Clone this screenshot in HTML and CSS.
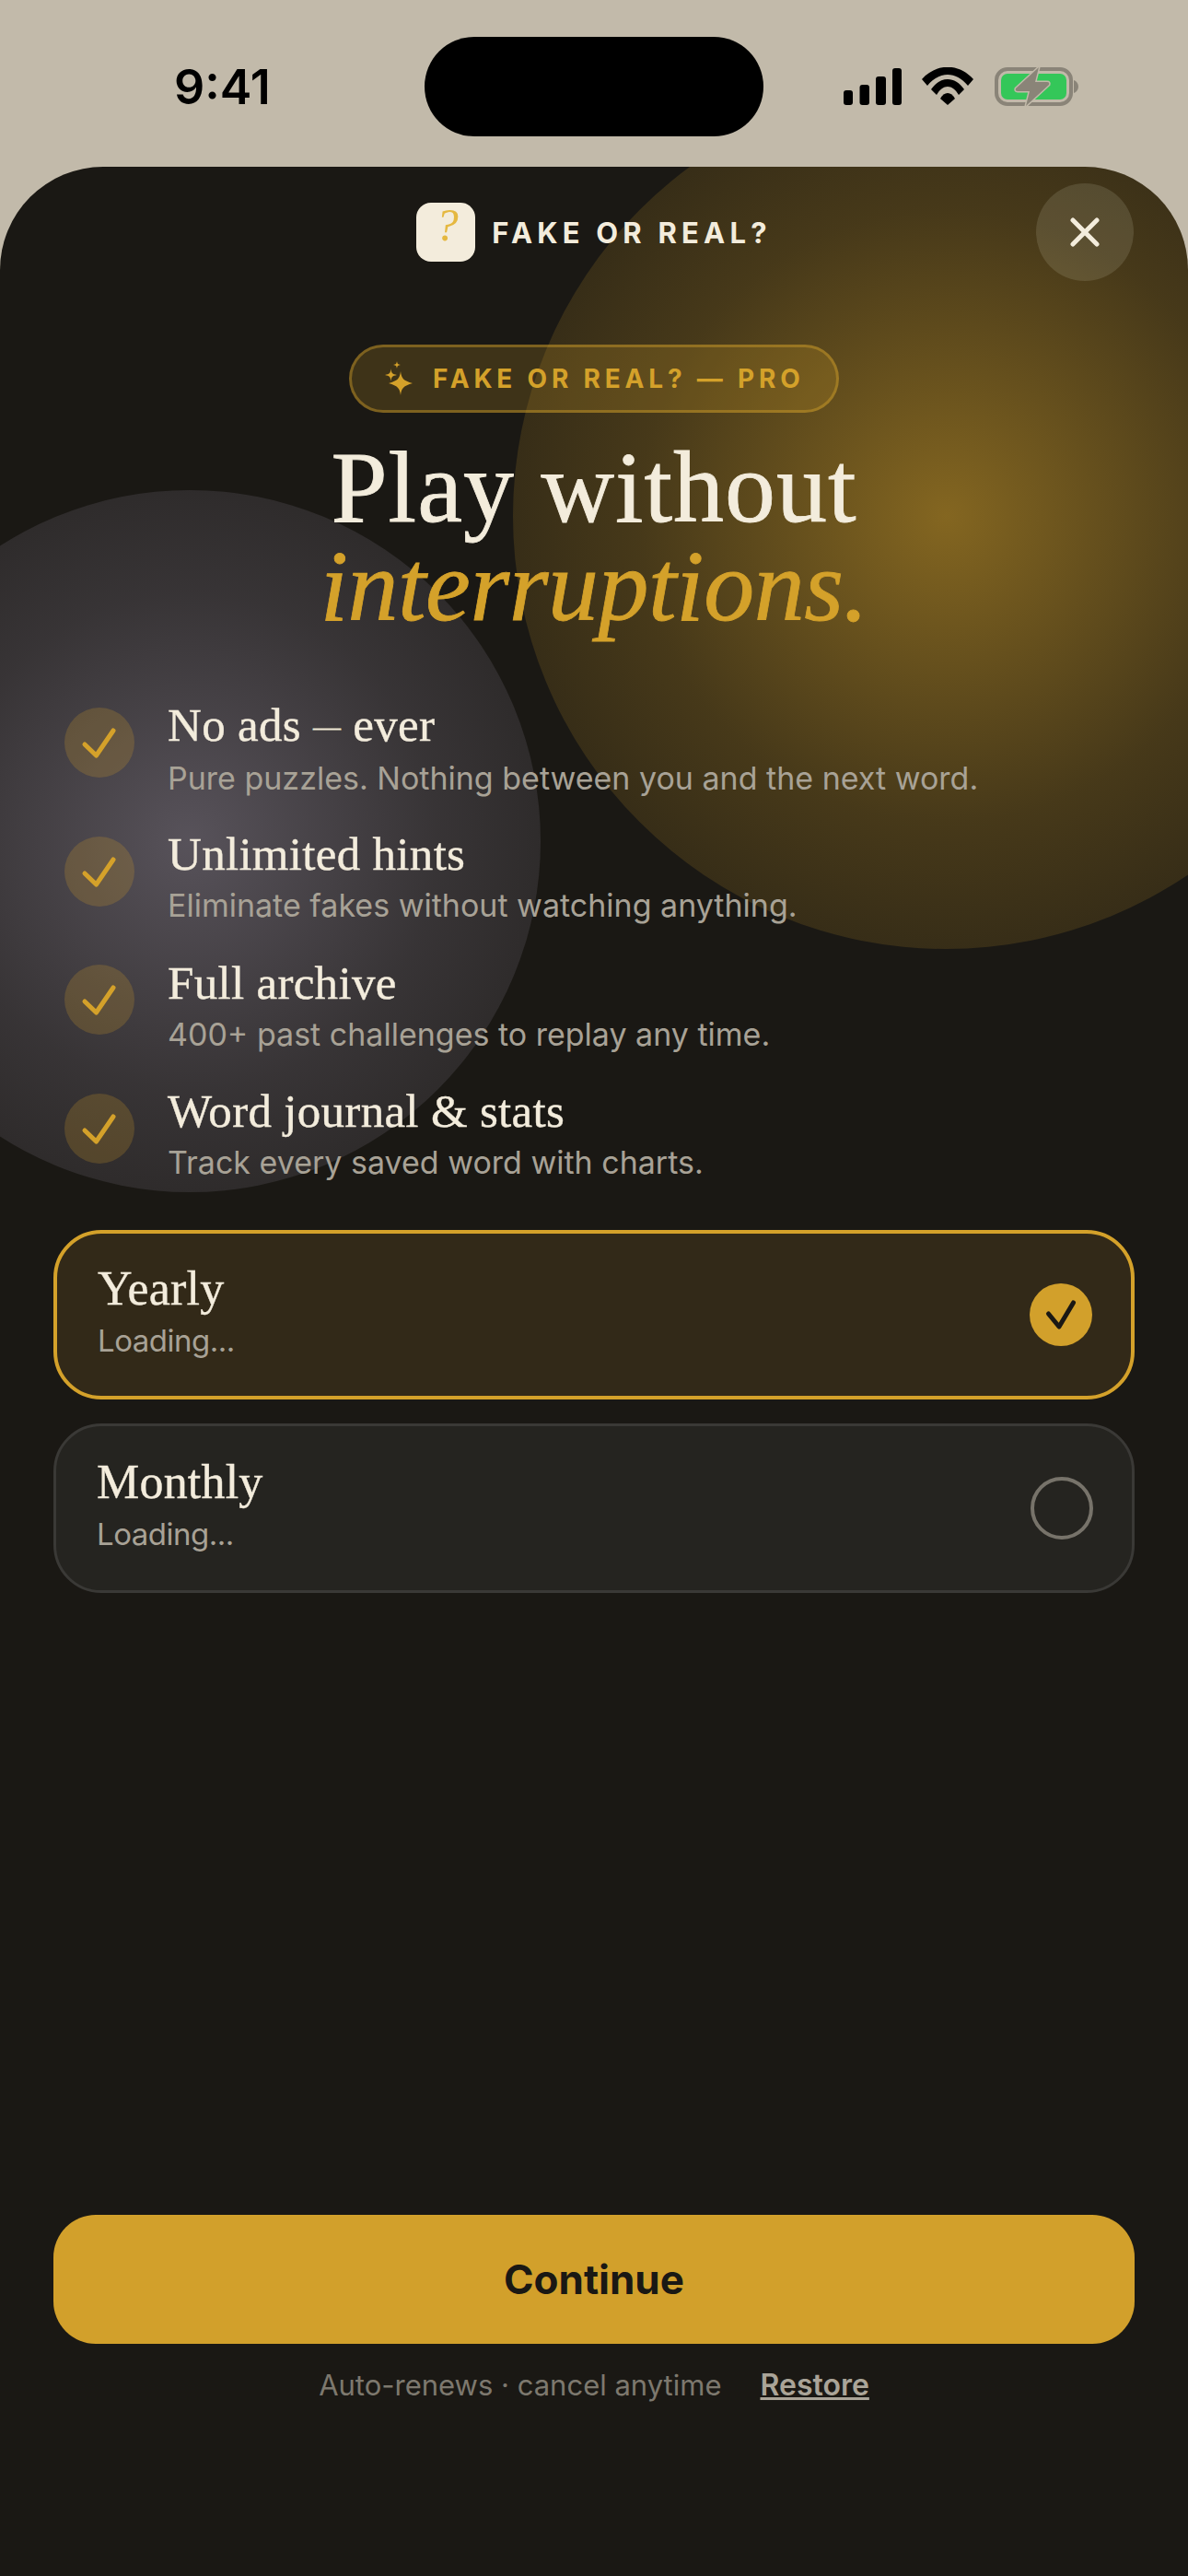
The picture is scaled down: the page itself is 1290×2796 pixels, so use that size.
FILE: index.html
```html
<!DOCTYPE html>
<html lang="en">
<head>
    <meta charset="UTF-8">
    <meta name="viewport" content="width=device-width, initial-scale=1.0">
    <title>Fake or Real? Pro</title>
    <link rel="stylesheet" href="styles.css">
</head>

<body>
    <div class="status-bar">
        <span class="status-time">9:41</span>
        <div class="island"></div>
        <div class="status-icons">
            <svg class="icon-signal" width="63" height="40" viewBox="0 0 63 40">
                <rect x="0" y="24" width="10" height="16" rx="3"/>
                <rect x="17.5" y="18" width="10.5" height="22" rx="3"/>
                <rect x="35" y="9" width="11" height="31" rx="3"/>
                <rect x="53" y="0" width="10" height="40" rx="3"/>
            </svg>
            <svg class="icon-wifi" width="56" height="41" viewBox="0 0 56 41">
                <path d="M0 13 C16 -4.700 40 -4.700 56 13 L50 20 C37 4 19 4 6 20 Z"/>
                <path d="M10 24 C20 9.300 36 9.300 46 24 L40 30 C33 18 23 18 16 30 Z"/>
                <path d="M20 34 C24 26 32 26 36 34 L28 41 Z"/>
            </svg>
            <svg class="icon-battery" width="91" height="44" viewBox="0 0 91 44">
                <rect x="2" y="2" width="81" height="38" rx="12" fill="none" stroke="#8a8478" stroke-width="4"/>
                <rect x="7" y="7" width="71" height="28" rx="7" fill="#34c759"/>
                <path d="M86 14 C89 15 91 18 91 21 C91 24 89 27 86 28 Z" fill="#8a8478"/>
                <path d="M48 0 L23 23 Q22 26 25 26 L38 26 L34 42 L59 19 Q60 16 57 16 L44 16 Z" fill="#8a8478" stroke="#c2baaa" stroke-width="3" paint-order="stroke"/>
            </svg>
        </div>
    </div>

    <main class="sheet">
        <div class="blob blob-gold"></div>
        <div class="blob blob-gray"></div>

        <header class="sheet-header">
            <div class="brand">
                <div class="brand-logo"><span>?</span></div>
                <span class="brand-name">FAKE OR REAL?</span>
            </div>
            <button class="close-btn" aria-label="Close">
                <svg width="32" height="32" viewBox="0 0 32 32">
                    <path d="M3 3 L29 29 M29 3 L3 29"/>
                </svg>
            </button>
        </header>

        <div class="hero">
            <div class="pro-badge">
                <svg width="30" height="38" viewBox="0 0 30 38">
                    <path d="M17 11 C18 19 20 21 30 24 C20 27 18 29 17 37 C16 29 14 27 4 24 C14 21 16 19 17 11 Z"/>
                    <path d="M6.500 8 C7 13 8 14 13 15 C8 16 7 17 6.500 22 C6 17 5 16 0 15 C5 14 6 13 6.500 8 Z"/>
                    <path d="M13 0 C13.500 3 14 3.500 17 4 C14 4.500 13.500 5 13 8 C12.500 5 12 4.500 9 4 C12 3.500 12.500 3 13 0 Z"/>
                </svg>
                <span>FAKE OR REAL? — PRO</span>
            </div>
            <h1>Play without<br><em>interruptions.</em></h1>
        </div>

        <ul class="features">
            <li class="feature">
                <span class="feature-check"><svg width="76" height="76" viewBox="0 0 76 76"><path d="M22 40 L34.500 52 L53 25"/></svg></span>
                <div class="feature-text">
                    <h3>No ads <span class="dash">—</span> ever</h3>
                    <p>Pure puzzles. Nothing between you and the next word.</p>
                </div>
            </li>
            <li class="feature">
                <span class="feature-check"><svg width="76" height="76" viewBox="0 0 76 76"><path d="M22 40 L34.500 52 L53 25"/></svg></span>
                <div class="feature-text">
                    <h3>Unlimited hints</h3>
                    <p>Eliminate fakes without watching anything.</p>
                </div>
            </li>
            <li class="feature">
                <span class="feature-check"><svg width="76" height="76" viewBox="0 0 76 76"><path d="M22 40 L34.500 52 L53 25"/></svg></span>
                <div class="feature-text">
                    <h3>Full archive</h3>
                    <p>400+ past challenges to replay any time.</p>
                </div>
            </li>
            <li class="feature">
                <span class="feature-check"><svg width="76" height="76" viewBox="0 0 76 76"><path d="M22 40 L34.500 52 L53 25"/></svg></span>
                <div class="feature-text">
                    <h3>Word journal &amp; stats</h3>
                    <p>Track every saved word with charts.</p>
                </div>
            </li>
        </ul>

        <div class="plans">
            <div class="plan plan-active">
                <div class="plan-text">
                    <h4>Yearly</h4>
                    <p>Loading...</p>
                </div>
                <span class="radio radio-on"><svg width="68" height="68" viewBox="0 0 68 68"><path d="M20.500 33 L32 47 L47.500 21"/></svg></span>
            </div>
            <div class="plan">
                <div class="plan-text">
                    <h4>Monthly</h4>
                    <p>Loading...</p>
                </div>
                <span class="radio"></span>
            </div>
        </div>

        <div class="cta">
            <button class="continue-btn">Continue</button>
            <div class="legal">
                <span>Auto-renews · cancel anytime</span>
                <a href="#">Restore</a>
            </div>
        </div>
    </main>
</body>
</html>
```

FILE: styles.css
```css
* {
    margin: 0;
    padding: 0;
    box-sizing: border-box;
}

body {
    width: 1290px;
    height: 2796px;
    overflow: hidden;
    background: #c2baaa;
    font-family: Inter, 'Liberation Sans', sans-serif;
    display: flex;
    flex-direction: column;
}

/* status bar */
.status-bar {
    height: 181px;
    flex: none;
    display: flex;
    align-items: flex-start;
}

.status-time {
    margin: 67px 0 0 189px;
    width: 272px;
    font-size: 52px;
    line-height: 56px;
    font-weight: 600;
    color: #000;
}

.island {
    width: 368px;
    height: 108px;
    margin-top: 40px;
    border-radius: 54px;
    background: #000;
}

.status-icons {
    margin: 73px 0 0 87px;
    display: flex;
    align-items: flex-start;
}

.icon-signal { margin-top: 1px; }
.icon-wifi { margin-left: 22px; }
.icon-battery { margin-left: 23px; overflow: visible; }

/* sheet */
.sheet {
    flex: 1;
    position: relative;
    overflow: hidden;
    background: #1a1814;
    border-radius: 112px 112px 0 0;
    display: flex;
    flex-direction: column;
}

.blob {
    position: absolute;
    border-radius: 50%;
}

.blob-gold {
    left: 557px;
    top: -91px;
    width: 940px;
    height: 940px;
    background: radial-gradient(circle, rgba(212, 161, 42, 0.57) 0%, rgba(212, 161, 42, 0.24) 50%, rgba(212, 161, 42, 0.04) 100%);
}

.blob-gray {
    left: -175px;
    top: 351px;
    width: 762px;
    height: 762px;
    background: radial-gradient(circle, rgba(140, 132, 150, 0.54) 0%, rgba(140, 132, 150, 0.26) 50%, rgba(140, 132, 150, 0.07) 100%);
}

.sheet-header {
    position: relative;
    margin: 18px 59px 0 0;
    display: grid;
    grid-template-columns: 1fr auto 1fr;
    padding-left: 59px;
    align-items: center;
}

.brand {
    grid-column: 2;
    display: flex;
    align-items: center;
    gap: 18px;
}

.brand-logo {
    width: 64px;
    height: 64px;
    padding-left: 2px;
    border-radius: 16px;
    background: #f3ecdc;
    display: flex;
    justify-content: center;
    color: #e5b840;
    font-family: 'Liberation Serif', serif;
    font-style: italic;
    font-size: 50px;
    line-height: 48px;
}

.brand-name {
    font-size: 31px;
    font-weight: 700;
    letter-spacing: 5.2px;
    color: #f3ecdc;
}

.close-btn {
    grid-column: 3;
    justify-self: end;
    width: 106px;
    height: 106px;
    border: none;
    border-radius: 50%;
    background: rgba(243, 236, 220, 0.13);
    display: flex;
    align-items: center;
    justify-content: center;
}

.close-btn path {
    fill: none;
    stroke: #f3ecdc;
    stroke-width: 5;
    stroke-linecap: round;
}

.hero {
    position: relative;
    margin-top: 69px;
    display: flex;
    flex-direction: column;
    align-items: center;
}

.pro-badge {
    height: 74px;
    width: 532px;
    padding-left: 36px;
    border: 3px solid rgba(212, 161, 42, 0.42);
    border-radius: 37px;
    background: rgba(212, 161, 42, 0.2);
    display: flex;
    align-items: center;
    gap: 22px;
    color: #d4a12a;
    font-size: 28px;
    font-weight: 700;
    letter-spacing: 4.8px;
}

.pro-badge svg path {
    fill: #d4a12a;
}

h1 {
    margin-top: 28px;
    font-family: 'Liberation Serif', serif;
    font-size: 110px;
    line-height: 107px;
    font-weight: 400;
    letter-spacing: 1px;
    -webkit-text-stroke: 0.8px currentColor;
    text-align: center;
    color: #f3ecdc;
}

h1 em {
    color: #d4a12a;
    letter-spacing: -0.5px;
}

/* feature list */
.features {
    position: relative;
    list-style: none;
    margin-top: 66px;
    padding-left: 70px;
    display: flex;
    flex-direction: column;
    gap: 39.5px;
}

.feature {
    display: flex;
    align-items: center;
    gap: 36px;
    height: 100px;
}

.feature-check {
    width: 76px;
    height: 76px;
    flex: none;
    border-radius: 50%;
    background: rgba(212, 161, 42, 0.22);
}

.feature-check path,
.radio path {
    fill: none;
    stroke: #d4a12a;
    stroke-width: 5;
    stroke-linecap: round;
    stroke-linejoin: round;
}

.feature-text {
    margin-top: 13px;
}

.feature h3 {
    font-family: 'Liberation Serif', serif;
    font-size: 51px;
    line-height: 56px;
    font-weight: 400;
    letter-spacing: 0.3px;
    -webkit-text-stroke: 0.4px currentColor;
    color: #f3ecdc;
}

.dash {
    font-size: 30px;
    vertical-align: 5px;
}

.feature p {
    margin-top: 6px;
    font-size: 34px;
    line-height: 44px;
    color: #a8a296;
}

/* plans */
.plans {
    position: relative;
    margin: 60px 58px 0;
    display: flex;
    flex-direction: column;
    gap: 26px;
}

.plan {
    height: 184px;
    padding: 0 42px 0 44px;
    border: 3px solid #3a3936;
    border-radius: 52px;
    background: #252420;
    display: flex;
    align-items: center;
    justify-content: space-between;
}

.plan-active {
    border: 4px solid #d4a12a;
    background: #322918;
}

.plan-text {
    margin-bottom: 6px;
}

.plan h4 {
    font-family: 'Liberation Serif', serif;
    font-size: 52px;
    line-height: 56px;
    font-weight: 400;
    letter-spacing: 0.2px;
    -webkit-text-stroke: 0.4px currentColor;
    color: #f3ecdc;
}

.plan p {
    margin-top: 7px;
    font-size: 33px;
    line-height: 42px;
    letter-spacing: -0.5px;
    color: #a8a296;
}

.radio {
    width: 68px;
    height: 68px;
    border: 4px solid #77736a;
    border-radius: 50%;
}

.radio-on {
    border: none;
    background: #d2a02b;
}

.radio-on path {
    stroke: #1a1814;
}

/* bottom action */
.cta {
    position: relative;
    margin: auto 58px 0;
    padding-bottom: 187px;
}

.continue-btn {
    display: block;
    width: 100%;
    height: 140px;
    border: none;
    border-radius: 46px;
    background: #d2a02b;
    color: #1a1814;
    font-family: inherit;
    font-size: 44px;
    font-weight: 700;
}

.legal {
    margin-top: 25px;
    display: flex;
    justify-content: center;
    gap: 42px;
    font-size: 31px;
    line-height: 40px;
    color: #7d786e;
}

.legal a {
    color: #aaa498;
    font-size: 32px;
    font-weight: 600;
}
```
